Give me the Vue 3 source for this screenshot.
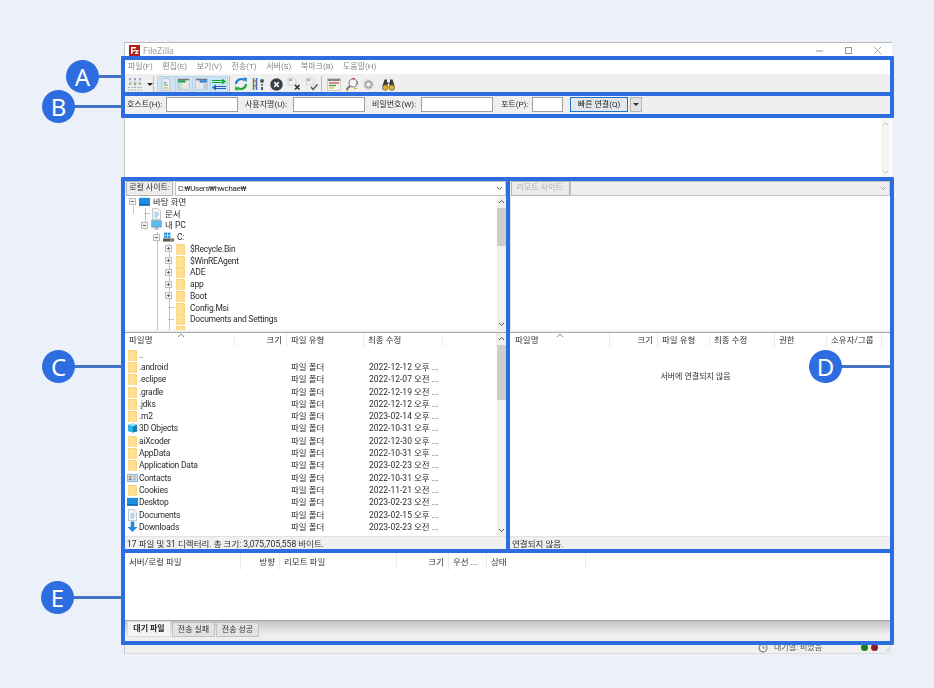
<script setup>
const menus = ['파일(F)', '편집(E)', '보기(V)', '전송(T)', '서버(S)', '북마크(B)', '도움말(H)']

const tree = [
  { level: 0, exp: 'minus', icon: 'desktop', name: '바탕 화면' },
  { level: 1, exp: 'stub', icon: 'doc', name: '문서' },
  { level: 1, exp: 'minus', icon: 'pc', name: '내 PC' },
  { level: 2, exp: 'minus', icon: 'drive', name: 'C:' },
  { level: 3, exp: 'plus', icon: 'folder', name: '$Recycle.Bin' },
  { level: 3, exp: 'plus', icon: 'folder', name: '$WinREAgent' },
  { level: 3, exp: 'plus', icon: 'folder', name: 'ADE' },
  { level: 3, exp: 'plus', icon: 'folder', name: 'app' },
  { level: 3, exp: 'plus', icon: 'folder', name: 'Boot' },
  { level: 3, exp: 'stub', icon: 'folder', name: 'Config.Msi' },
  { level: 3, exp: 'stub', icon: 'folder', name: 'Documents and Settings' },
  { level: 3, exp: 'stub', icon: 'folder', name: '' }
]

const files = [
  { icon: 'folder', name: '..', type: '', date: '' },
  { icon: 'folder', name: '.android', type: '파일 폴더', date: '2022-12-12 오후 ...' },
  { icon: 'folder', name: '.eclipse', type: '파일 폴더', date: '2022-12-07 오전 ...' },
  { icon: 'folder', name: '.gradle', type: '파일 폴더', date: '2022-12-19 오전 ...' },
  { icon: 'folder', name: '.jdks', type: '파일 폴더', date: '2022-12-12 오후 ...' },
  { icon: 'folder', name: '.m2', type: '파일 폴더', date: '2023-02-14 오후 ...' },
  { icon: 'cube', name: '3D Objects', type: '파일 폴더', date: '2022-10-31 오후 ...' },
  { icon: 'folder', name: 'aiXcoder', type: '파일 폴더', date: '2022-12-30 오후 ...' },
  { icon: 'folder', name: 'AppData', type: '파일 폴더', date: '2022-10-31 오후 ...' },
  { icon: 'folder', name: 'Application Data', type: '파일 폴더', date: '2023-02-23 오전 ...' },
  { icon: 'contacts', name: 'Contacts', type: '파일 폴더', date: '2022-10-31 오후 ...' },
  { icon: 'folder', name: 'Cookies', type: '파일 폴더', date: '2022-11-21 오전 ...' },
  { icon: 'desktop', name: 'Desktop', type: '파일 폴더', date: '2023-02-23 오전 ...' },
  { icon: 'doc', name: 'Documents', type: '파일 폴더', date: '2023-02-15 오후 ...' },
  { icon: 'download', name: 'Downloads', type: '파일 폴더', date: '2023-02-23 오전 ...' }
]

const localCols = ['파일명', '크기', '파일 유형', '최종 수정', '']
const remoteCols = ['파일명', '크기', '파일 유형', '최종 수정', '권한', '소유자/그룹']
const queueCols = ['서버/로컬 파일', '방향', '리모트 파일', '크기', '우선 ...', '상태']
const tabs = ['대기 파일', '전송 실패', '전송 성공']

const callouts = [
  { id: 'a', letter: 'A' },
  { id: 'b', letter: 'B' },
  { id: 'c', letter: 'C' },
  { id: 'd', letter: 'D' },
  { id: 'e', letter: 'E' }
]
const frames = ['fa', 'fb', 'fc', 'fd', 'fe']
</script>

<template>
  <div class="page">
    <svg class="defs" width="0" height="0">
      <defs>
        <symbol id="folder" viewBox="0 0 11 12">
          <path d="M1 1h8l1 1v9.800H1z" fill="#fbd678" />
          <path d="M1.800 2.200h6.700v9H1.800z" fill="#fde09a" />
        </symbol>
        <symbol id="desktop" viewBox="0 0 12 11">
          <path d="M0 1h12v8H0z" fill="#1a8fe3" />
          <path d="M0 8h12v1.600H0z" fill="#0d5fa8" />
        </symbol>
        <symbol id="pc" viewBox="0 0 12 11">
          <path d="M.5 .5h11v7.500H.5z" fill="#5cb8ee" stroke="#8fa6b8" stroke-width=".7" />
          <path d="M4.500 8h3v1.500h-3zM3 9.500h6v1H3z" fill="#9fb0bd" />
        </symbol>
        <symbol id="doc" viewBox="0 0 10 12">
          <path d="M1 .5h5.500L9 3v8.500H1z" fill="#f4f6f9" stroke="#a7b1bd" stroke-width=".7" />
          <path d="M3 5h4M3 7h4M3 9h3" stroke="#5fa3d8" stroke-width=".8" />
        </symbol>
        <symbol id="drive" viewBox="0 0 11 11">
          <path d="M0 7h11v3H0z" fill="#555" />
          <path d="M1 1h3v2.500H1zM4.500 1h3v2.500h-3zM1 4h3v2.500H1zM4.500 4h3v2.500h-3z" fill="#2f9fe0" />
          <path d="M7 8h3v1H7z" fill="#9ad04a" />
        </symbol>
        <symbol id="cube" viewBox="0 0 12 12">
          <path d="M1 2.500 6.500 1 11 2.500v7L6.500 11 1 9.500z" fill="#2fb3e6" />
          <path d="M6.500 4v7L11 9.500v-7z" fill="#0c7fc1" />
          <path d="M1 2.500 6.500 4 11 2.500 6.500 1z" fill="#8fdcf6" />
        </symbol>
        <symbol id="contacts" viewBox="0 0 12 11">
          <path d="M.5 1.500h11v8H.500z" fill="#d6e8f6" stroke="#5d8fba" stroke-width=".7" />
          <path d="M2 3h3v3H2z" fill="#d9913f" />
          <path d="M2 6.500h3V8H2z" fill="#3f78b5" />
          <path d="M6.500 3.500h3.500M6.500 5.500h3.500M6.500 7.500h3.500" stroke="#6c92b3" stroke-width=".8" />
        </symbol>
        <symbol id="download" viewBox="0 0 12 12">
          <path d="M4 0h4v6h3.500L6 11.500.5 6H4z" fill="#2b86dc" />
        </symbol>
      </defs>
    </svg>

    <div class="window">
      <header class="titlebar">
        <svg class="logo" width="11" height="11" viewBox="0 0 11 11">
          <rect width="11" height="11" fill="#b51c1c" />
          <path d="M2 2h5v1.500H3.500v1.700H6v1.300H3.500V9H2zM6 5h3.500v1.200L7.800 8h1.700v1H6V8l1.800-1.900H6z" fill="#fff" />
        </svg>
        <span class="app-name">FileZilla</span>
        <span class="win-btns">
          <svg width="9" height="9" viewBox="0 0 9 9"><path d="M1 5h7" stroke="#999" /></svg>
          <svg width="9" height="9" viewBox="0 0 9 9"><rect x="1.500" y="1.500" width="6" height="6" fill="none" stroke="#999" /></svg>
          <svg width="9" height="9" viewBox="0 0 9 9"><path d="m1 1 7 7M8 1 1 8" stroke="#999" stroke-width=".8" /></svg>
        </span>
      </header>

      <nav class="menubar">
        <span v-for="m in menus" :key="m">{{ m }}</span>
      </nav>

      <div class="toolbar">
        <svg class="tb site" width="14" height="14" viewBox="0 0 14 14">
          <g fill="#94a6c0"><rect x="1" y="1" width="2" height="2" /><rect x="6" y="1" width="2" height="2" /><rect x="11" y="1" width="2" height="2" /></g>
          <path d="M2 3v3h10V3M7 3v8" stroke="#a9b6c6" stroke-width=".7" fill="none" />
          <g fill="#a3ae86"><rect x="1" y="6" width="2" height="2" /><rect x="6" y="6" width="2" height="2" /><rect x="11" y="6" width="2" height="2" /></g>
          <path d="M0 10.500h14M0 13h14" stroke="#9fb5b2" stroke-width="1" stroke-dasharray="2 1" />
        </svg>
        <span class="caret"></span>
        <span class="sep first"></span>
        <div class="toggles">
          <span class="cell">
            <svg width="10" height="13" viewBox="0 0 11 14">
              <path d="M1 .5h6.500L10 3v10.500H1z" fill="#eef1f5" stroke="#a9b3bf" stroke-width=".8" />
              <path d="M3 4h3v2H3z" fill="#6fb2e2" /><path d="M3 7h5v1.500H3z" fill="#7fc27f" /><path d="M3 10h5v1.500H3z" fill="#d9b76a" />
            </svg>
          </span>
          <span class="cell">
            <svg width="13" height="12" viewBox="0 0 14 13">
              <rect x=".5" y=".5" width="13" height="12" fill="#e8e8e4" stroke="#b5bcc0" stroke-width=".7" />
              <path d="M1 1h12v1.500H1z" fill="#6d7d74" /><path d="M1 2.500h8V5H1z" fill="#1f9e4d" /><path d="M1 5h4v7H1z" fill="#c9d8cc" />
            </svg>
          </span>
          <span class="cell">
            <svg width="13" height="12" viewBox="0 0 14 13">
              <rect x=".5" y=".5" width="13" height="12" fill="#e8e8ea" stroke="#b5bcc0" stroke-width=".7" />
              <path d="M1 1h12v1.500H1z" fill="#6d7785" /><path d="M5 2.500h8V5H5z" fill="#2b7fd0" /><path d="M9 5h4v7H9z" fill="#c4d0dd" />
            </svg>
          </span>
          <span class="cell">
            <svg width="16" height="13" viewBox="0 0 16 13">
              <path d="M1 2.500h11M1 4.500h11" stroke="#14a83c" stroke-width="1.100" /><path d="m11 .5 4 3-4 3z" fill="#14a83c" />
              <path d="M4 8.500h11M4 10.500h11" stroke="#1d62c4" stroke-width="1.100" /><path d="m5 6.500-4 3 4 3z" fill="#1d62c4" />
            </svg>
          </span>
        </div>
        <span class="sep"></span>
        <svg class="tb refresh" width="14" height="14" viewBox="0 0 14 14">
          <path d="M2 7a5 5 0 0 1 8.500-3.500" fill="none" stroke="#1d82d8" stroke-width="2.200" />
          <path d="m9 .5 4 .5-.5 4.500z" fill="#1d82d8" />
          <path d="M12 7a5 5 0 0 1-8.500 3.500" fill="none" stroke="#1ca83c" stroke-width="2.200" />
          <path d="m5 13.500-4-.5.500-4.500z" fill="#1ca83c" />
        </svg>
        <svg class="tb filter" width="14" height="14" viewBox="0 0 14 14">
          <path d="M1.500 1v12" stroke="#1fa24a" stroke-width="1.500" /><path d="M4.500 1v12" stroke="#2b6fd0" stroke-width="1.500" />
          <path d="M1 4h4M1 9h4" stroke="#d14a3a" stroke-width="1" />
          <circle cx="10" cy="4" r="2" fill="#4a5560" /><path d="M9 7h2v1.500H9zM9 10h2v3H9z" fill="#4a5560" />
        </svg>
        <svg class="tb cancel" width="13" height="13" viewBox="0 0 13 13">
          <circle cx="6.500" cy="6.500" r="6.200" fill="#3a3f45" />
          <path d="m4.200 4.200 4.600 4.600M8.800 4.200 4.200 8.800" stroke="#f2f2f2" stroke-width="1.700" />
        </svg>
        <svg class="tb disc" width="14" height="14" viewBox="0 0 14 14">
          <path d="M1 1h6l2 2v5H1z" fill="#eceef0" stroke="#c4c8cc" stroke-width=".6" />
          <path d="M2 3h3" stroke="#666" />
          <path d="m8 8 4.500 4.500M12.500 8 8 12.500" stroke="#2a2a2a" stroke-width="1.500" />
        </svg>
        <svg class="tb recon" width="14" height="14" viewBox="0 0 14 14">
          <path d="M1 1h6l2 2v5H1z" fill="#eceef0" stroke="#c4c8cc" stroke-width=".6" />
          <path d="M2 3h3" stroke="#666" />
          <path d="m6 10 2 2.500 4.500-5" fill="none" stroke="#555" stroke-width="1.400" />
        </svg>
        <span class="sep after-recon"></span>
        <svg class="tb queue" width="14" height="13" viewBox="0 0 14 13">
          <rect x=".5" y=".5" width="13" height="12" fill="#f4f4f0" stroke="#b6b6b0" stroke-width=".6" />
          <path d="M1 2h12" stroke="#444" stroke-width="1.300" /><path d="M2 5h10" stroke="#d8473a" stroke-width="1.300" />
          <path d="M2 7.500h7" stroke="#2ba84a" stroke-width="1.300" /><path d="M2 10h5" stroke="#e6b13a" stroke-width="1.300" />
        </svg>
        <svg class="tb search" width="14" height="14" viewBox="0 0 14 14">
          <circle cx="8" cy="6" r="4" fill="#f5f5f0" stroke="#7d8388" stroke-width="1.100" />
          <path d="M5 9 1.500 12.500" stroke="#6c6c60" stroke-width="1.800" />
          <path d="M7 1.500h3" stroke="#d8473a" /><path d="M12.500 4.500v3" stroke="#2ba84a" /><path d="M9 11.500h3" stroke="#e6b13a" /><path d="M1 13.500h3" stroke="#e6b13a" />
        </svg>
        <svg class="tb gear" width="11" height="11" viewBox="0 0 11 11">
          <circle cx="5.500" cy="5.500" r="3.200" fill="none" stroke="#a6a6a6" stroke-width="2" />
          <circle cx="5.500" cy="5.500" r="5" fill="none" stroke="#d0d0d0" stroke-width="1.200" stroke-dasharray="1.500 1.500" />
        </svg>
        <svg class="tb bino" width="13" height="13" viewBox="0 0 13 13">
          <path d="M2.500 1.500h2.500v3h3v-3h2.500L12.500 8h-5V5.500h-2V8h-5z" fill="#3c3a34" />
          <circle cx="3.200" cy="9.500" r="2.800" fill="#e8b321" stroke="#3c3a34" stroke-width=".6" />
          <circle cx="9.800" cy="9.500" r="2.800" fill="#e8b321" stroke="#3c3a34" stroke-width=".6" />
        </svg>
      </div>

      <div class="quick">
        <label class="q-host">호스트(H):</label><span class="input w72"></span>
        <label class="q-user">사용자명(U):</label><span class="input w72"></span>
        <label class="q-pass">비밀번호(W):</label><span class="input w72"></span>
        <label class="q-port">포트(P):</label><span class="input w30"></span>
        <button class="connect">빠른 연결(Q)</button>
        <span class="connect-more"><i></i></span>
      </div>

      <section class="log">
        <div class="log-body"></div>
        <div class="sb faint">
          <svg class="chev" width="7" height="6" viewBox="0 0 7 6"><path d="m1 4 2.500-2.500L6 4" fill="none" stroke="#bbb" /></svg>
          <span class="track"></span>
          <svg class="chev" width="7" height="6" viewBox="0 0 7 6"><path d="m1 2 2.500 2.500L6 2" fill="none" stroke="#bbb" /></svg>
        </div>
      </section>

      <div class="panes">
        <section class="pane local">
          <div class="siterow">
            <span class="sitebtn">로컬 사이트:</span>
            <span class="pathbox">
              <span class="pathtext">C:₩Users₩hwchae₩</span>
              <svg width="7" height="5" viewBox="0 0 7 5"><path d="m1 1 2.500 2.500L6 1" fill="none" stroke="#666" /></svg>
            </span>
          </div>
          <div class="treewrap">
            <div class="tree">
              <svg class="guides" width="60" height="134" viewBox="0 0 60 134">
                <g stroke="#c4c4c4" fill="none">
                  <path d="M8.500 10v8" /><path d="M20.500 12v22" /><path d="M32.500 36v98" /><path d="M44.500 48v86" />
                </g>
              </svg>
              <div v-for="(row, i) in tree" :key="i" class="tree-row" :style="{ paddingLeft: 4 + row.level * 12 + 'px' }">
                <span class="exp" :class="row.exp"></span>
                <svg class="ic"><use :href="'#' + row.icon" /></svg>
                <span class="tname" :class="{ latin: row.level === 3 }">{{ row.name }}</span>
              </div>
            </div>
            <div class="sb">
              <svg class="chev" width="7" height="6" viewBox="0 0 7 6"><path d="m1 4 2.500-2.500L6 4" fill="none" stroke="#555" /></svg>
              <span class="track"><i class="thumb t-tree"></i></span>
              <svg class="chev" width="7" height="6" viewBox="0 0 7 6"><path d="m1 2 2.500 2.500L6 2" fill="none" stroke="#555" /></svg>
            </div>
          </div>
          <div class="listwrap">
            <div class="list">
              <div class="lhead lcols">
                <span v-for="(c, i) in localCols" :key="i" :class="{ right: i === 1 }">{{ c }}</span>
                <svg class="sort" width="8" height="5" viewBox="0 0 8 5"><path d="m1 4 3-3 3 3" fill="none" stroke="#888" /></svg>
              </div>
              <div class="rows">
                <div v-for="f in files" :key="f.name" class="frow lcols">
                  <span class="fname"><svg class="ic"><use :href="'#' + f.icon" /></svg>{{ f.name }}</span>
                  <span></span>
                  <span>{{ f.type }}</span>
                  <span class="fdate">{{ f.date }}</span>
                </div>
              </div>
            </div>
            <div class="sb">
              <svg class="chev" width="7" height="6" viewBox="0 0 7 6"><path d="m1 4 2.500-2.500L6 4" fill="none" stroke="#555" /></svg>
              <span class="track"><i class="thumb t-list"></i></span>
              <svg class="chev" width="7" height="6" viewBox="0 0 7 6"><path d="m1 2 2.500 2.500L6 2" fill="none" stroke="#555" /></svg>
            </div>
          </div>
          <div class="statusline">17 파일 및 31 디렉터리. 총 크기: 3,075,705,558 바이트.</div>
        </section>

        <section class="pane remote">
          <div class="siterow">
            <span class="sitebtn off">리모트 사이트:</span>
            <span class="pathbox off">
              <span></span>
              <svg width="7" height="5" viewBox="0 0 7 5"><path d="m1 1 2.500 2.500L6 1" fill="none" stroke="#aaa" /></svg>
            </span>
          </div>
          <div class="treewrap blank"></div>
          <div class="listwrap">
            <div class="list">
              <div class="lhead rcols">
                <span v-for="(c, i) in remoteCols" :key="i" :class="{ right: i === 1 }">{{ c }}</span>
                <svg class="sort r" width="8" height="5" viewBox="0 0 8 5"><path d="m1 4 3-3 3 3" fill="none" stroke="#888" /></svg>
              </div>
              <div class="notconn">서버에 연결되지 않음</div>
            </div>
          </div>
          <div class="statusline">연결되지 않음.</div>
        </section>
      </div>

      <section class="queue-panel">
        <div class="qhead qcols">
          <span v-for="(c, i) in queueCols" :key="c" :class="{ right: i === 1 || i === 3 }">{{ c }}</span>
        </div>
        <div class="qbody"></div>
        <div class="tabs">
          <span v-for="(t, i) in tabs" :key="t" class="tab" :class="{ active: i === 0 }">{{ t }}</span>
        </div>
      </section>

      <footer class="statusbar">
        <svg width="10" height="10" viewBox="0 0 10 10"><circle cx="5" cy="5" r="4" fill="#f4f4f4" stroke="#8a8a8a" stroke-width="1.300" /><path d="M5 2.500V5h2" stroke="#777" fill="none" /></svg>
        <span class="qstate">대기열: 비었음</span>
        <span class="leds"><i class="led g"></i><i class="led r"></i></span>
        <svg class="grip" width="8" height="8" viewBox="0 0 8 8"><path d="M7 1 1 7M7 4 4 7" stroke="#c6c6c6" /></svg>
      </footer>
    </div>

    <i v-for="f in frames" :key="f" class="frame" :class="f"></i>
    <template v-for="c in callouts" :key="c.id">
      <i class="line" :class="'l-' + c.id"></i>
      <span class="badge" :class="'b-' + c.id">{{ c.letter }}</span>
    </template>
  </div>
</template>

<style>
html, body { margin: 0; background: #ecf0f9; }
</style>

<style scoped>
.page {
  position: relative;
  width: 934px;
  height: 688px;
  overflow: hidden;
  background: #ecf0f9;
  font-family: Roboto, "Noto Sans CJK KR", sans-serif;
}
.defs { position: absolute; }

.window {
  position: absolute;
  left: 124px;
  top: 42px;
  width: 768px;
  height: 612px;
  box-sizing: border-box;
  display: flex;
  flex-direction: column;
  background: #f0f0f0;
  border-top: 1px solid #b8b8b8;
  border-left: 1px solid #c8c8c8;
  border-bottom: 1px solid #dcdcdc;
  color: #2c2c2c;
  font-size: 8.5px;
  line-height: 12px;
  filter: blur(.5px);
}

.titlebar {
  height: 15px;
  flex: none;
  display: flex;
  align-items: center;
  background: #fff;
  padding-left: 4px;
}
.logo { margin-right: 3px; }
.app-name { color: #a0a0a0; font-size: 9px; }
.win-btns { margin-left: auto; display: flex; gap: 20px; padding-right: 10px; }

.menubar {
  height: 16px;
  flex: none;
  display: flex;
  align-items: center;
  gap: 9.600px;
  background: #fff;
  padding-left: 3px;
  padding-top: 2px;
  box-sizing: border-box;
  color: #858585;
  font-size: 8px;
}

.toolbar {
  height: 20px;
  flex: none;
  display: flex;
  align-items: center;
  padding-left: 3px;
  background: #efefef;
}
.tb { flex: none; }
.caret {
  width: 0; height: 0; margin-left: 5px;
  border: 3px solid transparent;
  border-top: 3px solid #222;
  border-bottom: 0;
}
.sep { width: 1px; height: 16px; background: #bdbdbd; flex: none; margin: 0 4px 0 1px; }
.sep.first { margin: 0 3px 0 0; }
.toggles {
  display: flex;
  height: 17px;
  width: 71px;
  background: #cfe3f7;
  border: 1px solid #b5d4f0;
  box-sizing: border-box;
  flex: none;
}
.cell { flex: 1; display: flex; align-items: center; justify-content: center; border-right: 1px solid #b5d4f0; }
.cell:last-child { border-right: 0; }
.filter { margin-left: 4px; }
.cancel { margin-left: 4px; }
.disc { margin-left: 4px; }
.recon { margin-left: 4px; }
.sep.after-recon { margin: 0 5px 0 2px; }
.search { margin-left: 4px; }
.gear { margin-left: 4px; }
.bino { margin-left: 8px; }

.quick {
  height: 23px;
  flex: none;
  display: flex;
  align-items: center;
  padding-left: 2px;
  padding-bottom: 2px;
  box-sizing: border-box;
  background: #efefef;
}
.quick label { font-size: 8px; color: #2c2c2c; white-space: nowrap; }
.q-host { width: 39px; }
.q-user { width: 48px; margin-left: 7px; }
.q-pass { width: 49px; margin-left: 7px; }
.q-port { width: 31px; margin-left: 8px; }
.input {
  height: 15px;
  background: #fff;
  border: 1px solid #9f9f9f;
  box-sizing: border-box;
  flex: none;
}
.w72 { width: 72px; }
.w30 { width: 31px; }
.connect {
  width: 58px;
  height: 15px;
  margin-left: 7px;
  padding: 0;
  background: #e4e8ec;
  border: 1.500px solid #1c74cc;
  font: inherit;
  font-size: 8px;
  line-height: 11px;
  color: #222;
}
.connect-more {
  width: 12px;
  height: 15px;
  margin-left: 2px;
  background: #e2e2e2;
  border: 1px solid #b4b4b4;
  box-sizing: border-box;
  display: flex;
  align-items: center;
  justify-content: center;
}
.connect-more i { border: 3px solid transparent; border-top: 3px solid #333; border-bottom: 0; }

.log {
  height: 60px;
  flex: none;
  margin-top: 1px;
  display: flex;
  background: #fff;
  padding-right: 2px;
}
.log-body { flex: 1; }

.sb {
  width: 9px;
  flex: none;
  display: flex;
  flex-direction: column;
  align-items: center;
  background: #f0f0f0;
}
.sb.faint { background: #f5f5f5; }
.chev { flex: none; margin: 3px 0; }
.track { flex: 1; width: 100%; display: block; }
.thumb { display: block; background: #cdcdcd; width: 100%; }
.t-tree { height: 38px; }
.t-list { height: 55px; }

.panes {
  height: 374px;
  flex: none;
  display: flex;
  gap: 4px;
  padding-right: 2px;
}
.pane { display: flex; flex-direction: column; padding-top: 3px; box-sizing: border-box; min-width: 0; }
.local { width: 381px; flex: none; }
.remote { flex: 1; }

.siterow { height: 15px; flex: none; display: flex; }
.sitebtn {
  flex: none;
  padding: 0 2px;
  background: #ececec;
  border: 1px solid #b5b5b5;
  white-space: nowrap;
  line-height: 12px;
  font-size: 8px;
  color: #2c2c2c;
}
.local .sitebtn { width: 47px; margin-left: 1px; text-align: center; box-sizing: border-box; }
.sitebtn.off { color: #b0b0b0; width: 59px; box-sizing: border-box; text-align: center; margin-left: 1px; }
.pathbox {
  flex: 1;
  display: flex;
  align-items: center;
  justify-content: space-between;
  padding: 0 2px 0 2px;
  background: #fff;
  border: 1px solid #c4c4c4;
  margin-left: 2px;
}
.pathtext { font-size: 8px; letter-spacing: -.3px; }
.pathbox.off { background: #efefef; margin-left: 0; }

.treewrap {
  height: 134px;
  flex: none;
  display: flex;
  background: #fff;
}
.treewrap.blank { display: block; border-left: 1px solid #ddd; }
.tree { position: relative; flex: 1; overflow: hidden; }
.guides { position: absolute; left: 0; top: 0; }
.tree-row {
  position: relative;
  height: 11.750px;
  display: flex;
  align-items: center;
  white-space: nowrap;
}
.exp { width: 7px; height: 7px; margin-right: 3px; flex: none; box-sizing: border-box; position: relative; }
.exp.plus, .exp.minus { border: 1px solid #bcbcbc; background: #f2f2f2; }
.exp.plus::before, .exp.minus::before {
  content: ""; position: absolute; left: 1px; right: 1px; top: 2px; height: 1px; background: #667;
}
.exp.plus::after {
  content: ""; position: absolute; top: 1px; bottom: 1px; left: 2px; width: 1px; background: #667;
}
.exp.stub::before {
  content: ""; position: absolute; left: 3px; right: -2px; top: 3px; height: 1px; background: #c4c4c4;
}
.ic { width: 11px; height: 12px; flex: none; }
.tname { margin-left: 3px; }
.tname.latin { margin-left: 4px; letter-spacing: -.24px; }

.listwrap {
  flex: 1;
  min-height: 0;
  display: flex;
  margin-top: 2px;
  background: #fff;
  border-top: 1px solid #a8a8a8;
}
.list { flex: 1; position: relative; min-width: 0; overflow: hidden; }
.lhead { height: 14px; align-items: center; color: #333; }
.lhead span { border-right: 1px solid #ececec; padding-left: 4px; height: 14px; line-height: 14px; box-sizing: border-box; }
.lhead .right { text-align: right; padding-right: 4px; }
.lcols { display: grid; grid-template-columns: 110px 52px 77px 79px 1fr; }
.rcols { display: grid; grid-template-columns: 99px 48px 52px 65px 52px 55px; padding-left: 1px; }
.sort { position: absolute; left: 52px; top: 0; }
.sort.r { left: 46px; }
.rows { padding-top: 1.500px; }
.frow { height: 12.300px; align-items: center; white-space: nowrap; }
.frow > span { padding-left: 4px; }
.frow > .fdate { padding-left: 5px; }
.fname { display: flex; align-items: center; padding-left: 2px !important; letter-spacing: -.24px; }
.fname .ic { margin-right: 1px; }
.notconn { text-align: center; margin-top: 24px; padding-right: 9px; font-size: 8px; }

.statusline {
  height: 16px;
  flex: none;
  padding-left: 2px;
  line-height: 15px;
  background: #f0f0f0;
  border-top: 1px solid #e2e2e2;
  box-sizing: border-box;
  font-size: 8.5px;
}

.queue-panel {
  height: 90px;
  flex: none;
  display: flex;
  flex-direction: column;
  border-top: 1px solid #a9a9a9;
  box-sizing: border-box;
}
.qhead { height: 17px; flex: none; background: #fff; color: #333; }
.qhead span { border-right: 1px solid #ececec; padding-left: 4px; line-height: 19px; box-sizing: border-box; }
.qhead .right { text-align: right; padding-right: 4px; }
.qcols { display: grid; grid-template-columns: 116px 39px 117px 52px 38px 99px 1fr; }
.qbody { flex: 1; background: #fff; border-bottom: 1px solid #a9a9a9; }
.tabs {
  height: 21px;
  flex: none;
  display: flex;
  gap: 1px;
  padding-left: 2px;
  background: linear-gradient(#c4c4c4, #efefef 65%);
}
.tab {
  width: 43px;
  height: 15px;
  margin-top: 1px;
  text-align: center;
  line-height: 14px;
  background: #e2e2e2;
  border: 1px solid #c2c2c2;
  box-sizing: border-box;
  font-size: 8px;
  color: #333;
}
.tab.active { width: 44px; background: #f4f4f4; font-weight: 700; color: #222; height: 16px; margin-top: 0; border-color: #ddd; }

.statusbar {
  flex: 1;
  min-height: 0;
  display: flex;
  align-items: center;
  padding-left: 633px;
  font-size: 8px;
  position: relative;
}
.qstate { margin-left: 6px; color: #555; line-height: 10px; }
.leds { position: absolute; left: 736px; top: 2px; display: flex; gap: 3px; }
.led { width: 7px; height: 7px; border-radius: 50%; }
.led.g { background: #1d7a1d; }
.led.r { background: #8a1f1f; }
.grip { position: absolute; right: 0; bottom: 0; }

.frame { position: absolute; border: 4px solid #2e6ddf; box-sizing: border-box; border-radius: 1px; }
.fa { left: 121px; top: 56px; width: 773px; height: 40px; }
.fb { left: 121px; top: 92px; width: 773px; height: 26px; }
.fc { left: 121px; top: 177px; width: 389px; height: 376px; }
.fd { left: 506px; top: 177px; width: 388px; height: 376px; }
.fe { left: 121px; top: 549px; width: 773px; height: 96px; }

.line { position: absolute; height: 3px; background: #4472c4; }
.l-a { left: 98px; width: 25px; top: 75px; }
.l-b { left: 74px; width: 49px; top: 105px; }
.l-c { left: 74px; width: 49px; top: 365px; }
.l-d { left: 840px; width: 51px; top: 365px; }
.l-e { left: 72px; width: 51px; top: 596px; }

.badge {
  position: absolute;
  width: 33px;
  height: 33px;
  border-radius: 50%;
  background: #2e6ddf;
  color: #fff;
  font-family: "Noto Sans", sans-serif;
  font-size: 24px;
  line-height: 33px;
  text-align: center;
}
.b-a { left: 66px; top: 60px; }
.b-b { left: 42px; top: 90px; }
.b-c { left: 42px; top: 350px; }
.b-d { left: 809px; top: 350px; }
.b-e { left: 41px; top: 581px; }
</style>
